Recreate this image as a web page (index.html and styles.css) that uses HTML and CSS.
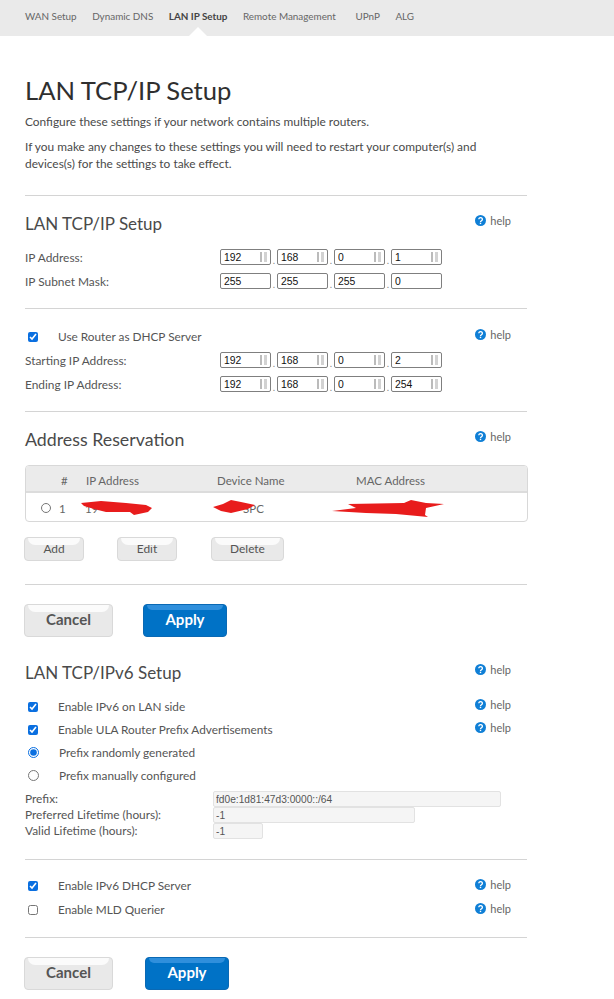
FILE: index.html
```html
<!DOCTYPE html>
<html lang="en">
<head>
<meta charset="utf-8">
<title>LAN TCP/IP Setup</title>
<link rel="stylesheet" href="styles.css">
</head>
<body>
<nav class="tabs">
  <a>WAN Setup</a><a>Dynamic DNS</a><a class="active">LAN IP Setup</a><a class="wide">Remote Management</a><a>UPnP</a><a>ALG</a>
</nav>
<svg width="0" height="0" class="defs"><defs>
  <symbol id="q" viewBox="0 0 11 11"><circle cx="5.5" cy="5.5" r="5.5" fill="#0f7fd6"/><path d="M3.8 4.3a1.8 1.6 0 1 1 2.7 1.4c-.7.4-1 .7-1 1.4" fill="none" stroke="#fff" stroke-width="1.3"/><rect x="4.8" y="7.7" width="1.4" height="1.4" fill="#fff"/></symbol>
</defs></svg>
<main class="page">
  <h1>LAN TCP/IP Setup</h1>
  <p class="intro">Configure these settings if your network contains multiple routers.</p>
  <p class="intro second">If you make any changes to these settings you will need to restart your computer(s) and devices(s) for the settings to take effect.</p>

  <section class="block first">
    <div class="head"><h2>LAN TCP/IP Setup</h2><a class="help"><svg class="q"><use href="#q"/></svg>help</a></div>
    <div class="iprow r1"><label>IP Address:</label><div class="octets"><input class="spin" type="text" value="192"><i>.</i><input class="spin" type="text" value="168"><i>.</i><input class="spin" type="text" value="0"><i>.</i><input class="spin" type="text" value="1"></div></div>
    <div class="iprow r2"><label>IP Subnet Mask:</label><div class="octets"><input type="text" value="255"><i>.</i><input type="text" value="255"><i>.</i><input type="text" value="255"><i>.</i><input type="text" value="0"></div></div>
  </section>

  <section class="block dhcp">
    <div class="check"><label class="opt"><input type="checkbox" checked><span>Use Router as DHCP Server</span></label><a class="help"><svg class="q"><use href="#q"/></svg>help</a></div>
    <div class="iprow r3"><label>Starting IP Address:</label><div class="octets"><input class="spin" type="text" value="192"><i>.</i><input class="spin" type="text" value="168"><i>.</i><input class="spin" type="text" value="0"><i>.</i><input class="spin" type="text" value="2"></div></div>
    <div class="iprow r2b"><label>Ending IP Address:</label><div class="octets"><input class="spin" type="text" value="192"><i>.</i><input class="spin" type="text" value="168"><i>.</i><input class="spin" type="text" value="0"><i>.</i><input class="spin" type="text" value="254"></div></div>
  </section>

  <section class="block reserve">
    <div class="head"><h2>Address Reservation</h2><a class="help"><svg class="q"><use href="#q"/></svg>help</a></div>
    <div class="table">
      <div class="trow thead"><span class="c-num">#</span><span class="c-ip">IP Address</span><span class="c-name">Device Name</span><span class="c-mac">MAC Address</span></div>
      <div class="trow tbody"><input type="radio" class="c-radio"><span class="c-n">1</span><span class="c-ip2">19</span><span class="c-name2">SPC</span></div>
      <svg class="scribble" width="502" height="30" viewBox="0 0 502 30"><path d="M55 10L75 8L100 10L120 12L126 15L122 19L108 22L104 19L80 19L68 16L58 13ZM187 14L197 11L205 7L215 9L229 12L222 16L205 20L195 18ZM306 18L330 15L322 11L378 10L385 7L400 10L418 11L400 15L399 22L402 24L370 21L340 20Z" fill="#e81c1c"/></svg>
    </div>
    <div class="actions"><button class="btn small add">Add</button><button class="btn small edit">Edit</button><button class="btn small del">Delete</button></div>
  </section>

  <section class="block submit">
    <button class="btn big">Cancel</button><button class="btn primary">Apply</button>
  </section>

  <div class="head v6"><h2>LAN TCP/IPv6 Setup</h2><a class="help"><svg class="q"><use href="#q"/></svg>help</a></div>
  <div class="check gap1"><label class="opt"><input type="checkbox" checked><span>Enable IPv6 on LAN side</span></label><a class="help"><svg class="q"><use href="#q"/></svg>help</a></div>
  <div class="check"><label class="opt"><input type="checkbox" checked><span>Enable ULA Router Prefix Advertisements</span></label><a class="help"><svg class="q"><use href="#q"/></svg>help</a></div>
  <div class="check"><label class="opt"><input type="radio" name="prefix" checked><span>Prefix randomly generated</span></label></div>
  <div class="check"><label class="opt"><input type="radio" name="prefix"><span>Prefix manually configured</span></label></div>
  <div class="field top"><label>Prefix:</label><input class="w-l" type="text" value="fd0e:1d81:47d3:0000::/64"></div>
  <div class="field"><label>Preferred Lifetime (hours):</label><input class="w-m" type="text" value="-1"></div>
  <div class="field"><label>Valid Lifetime (hours):</label><input class="w-s" type="text" value="-1"></div>

  <section class="block server">
    <div class="check"><label class="opt"><input type="checkbox" checked><span>Enable IPv6 DHCP Server</span></label><a class="help"><svg class="q"><use href="#q"/></svg>help</a></div>
    <div class="check"><label class="opt"><input type="checkbox"><span>Enable MLD Querier</span></label><a class="help"><svg class="q"><use href="#q"/></svg>help</a></div>
  </section>

  <section class="block submit last">
    <button class="btn big">Cancel</button><button class="btn primary far">Apply</button>
  </section>
</main>
</body>
</html>
```
FILE: styles.css
```css
* { box-sizing: border-box; }
html, body { margin: 0; padding: 0; background: #fff; }
body { font-family: Lato, "Noto Sans", sans-serif; color: #5a5a5a; font-size: 12px; overflow: hidden; }
.defs { position: absolute; }
.tabs { height: 36px; background: #eaeaea; display: flex; gap: 15.5px; padding: 9px 0 0 25px; font-size: 9.9px; line-height: 15px; color: #666; position: relative; }
.tabs .wide { min-width: 97px; }
.tabs .active { color: #444; font-weight: 700; position: relative; }
.tabs .active::after { content: ""; position: absolute; left: 20px; top: 18px; border: 9px solid transparent; border-top: 0; border-bottom-color: #fff; }
.page { width: 527px; padding-left: 25px; }
h1 { margin: 36px 0 0; font-size: 25.6px; line-height: 36px; font-weight: 400; color: #2f2f2f; }
.intro { margin: 5px 0 0; font-size: 11.9px; line-height: 17px; color: #4a4a4a; width: 480px; }
.second { margin-top: 8px; }
.block { border-top: 1px solid #d4d4d4; }
.first { margin-top: 23px; height: 113px; padding-top: 15px; }
h2 { margin: 0; font-size: 17px; line-height: 26px; font-weight: 400; color: #4a4a4a; }
.reserve h2 { font-size: 17.8px; line-height: 24px; }
.head { display: flex; justify-content: space-between; padding-right: 16px; height: 26px; }
.help { display: inline-flex; align-items: center; gap: 4px; font-size: 11px; line-height: 15px; color: #666; height: 15px; }
.head .help { margin-top: 2px; }
.check .help { margin-bottom: 4px; }
.server .check .help { margin-bottom: 2px; }
.q { width: 11px; height: 11px; }
.iprow { display: flex; align-items: center; height: 16px; }
.iprow label { width: 195px; font-size: 11.9px; color: #555; }
.r1 { margin-top: 12px; }
.r2 { margin-top: 8px; }
.r3 { margin-top: 4px; }
.r2b { margin-top: 8px; }
.octets { display: flex; width: 222px; justify-content: space-between; align-items: flex-end; }
.octets i { font-style: normal; font-size: 10px; line-height: 10px; color: #888; width: 6px; text-align: center; }
.octets input { width: 51px; height: 16px; padding: 0 2px 0 3px; border: 1px solid #7f7f7f; border-radius: 2px; font: 10.4px "Liberation Sans", Arial, sans-serif; color: #111; background: #fff; outline: 0; }
.octets .spin { background-image: linear-gradient(#bbb, #bbb), linear-gradient(#d2d2d2, #d2d2d2); background-size: 2px 10px, 3px 10px; background-position: right 8px center, right 3px center; background-repeat: no-repeat; }
.dhcp { height: 103px; padding-top: 16px; }
.check { display: flex; justify-content: space-between; align-items: center; height: 23px; padding-right: 16px; }
.opt { display: flex; align-items: center; font-size: 11.8px; color: #555; }
.opt input { width: 10px; height: 10px; margin: 0 20px 0 3px; accent-color: #0a6fe0; flex: none; }
.opt input[type=radio] { width: 11px; height: 11px; margin-right: 20px; margin-left: 3px; }
.reserve { height: 173px; padding-top: 15px; }
.table { position: relative; margin-top: 12px; width: 503px; height: 57px; border: 1px solid #d8d8d8; border-radius: 4px; overflow: hidden; font-size: 11.5px; color: #666; }
.trow { position: relative; display: flex; align-items: center; }
.thead { height: 27px; background: #ebebeb; border-bottom: 2px solid #dcdcdc; padding-top: 3px; }
.tbody { height: 28px; padding-top: 2px; }
.c-num { margin-left: 35px; width: 25px; }
.c-ip { width: 131px; }
.c-name { width: 139px; }
.c-radio { margin: 0 0 0 15px; width: 10px; height: 10px; }
.c-n { margin-left: 8px; width: 26px; }
.c-ip2 { width: 132px; }
.c-name2 { margin-left: 26px; }
.scribble { position: absolute; left: 0; top: 27px; }
.actions { display: flex; margin: 15px 0 0 -1px; }
.btn { position: relative; overflow: hidden; font-family: inherit; border: 1px solid #d9d9d9; border-radius: 4px; background: #e9e9e9; color: #555; padding: 0 0 2px; display: block; }
.btn::before { content: ""; position: absolute; top: 0; left: 3px; right: 3px; height: 7px; background: #fbfbfb; border-radius: 0 0 9px 9px; }
.small { height: 24px; font-size: 11.9px; }
.add { width: 60px; }
.edit { width: 60px; margin-left: 33px; }
.del { width: 73px; margin-left: 34px; }
.submit { height: 68px; padding-top: 19px; display: flex; align-items: flex-start; }
.big { width: 89px; height: 33px; margin-left: -1px; font-size: 15px; font-weight: 700; padding-bottom: 4px; }
.primary { width: 84px; height: 33px; margin-left: 30px; background: #0072c6; border-color: #0a69b4; color: #fff; font-size: 15px; font-weight: 700; padding-bottom: 4px; }
.primary::before { background: #2f8fdc; height: 5px; }
.far { margin-left: 32px; }
.v6 { margin-top: 8px; }
.gap1 { margin-top: 9px; }
.field { display: flex; align-items: center; height: 16px; font-size: 11.9px; color: #555; }
.field label { width: 188px; line-height: 16px; }
.top { margin-top: 4px; }
.field input { height: 16px; padding: 0 2px; border: 1px solid #e2e2e2; border-radius: 2px; background: #f5f5f5; font: 10.2px "Liberation Sans", Arial, sans-serif; color: #555; }
.w-l { width: 288px; }
.w-m { width: 202px; }
.w-s { width: 50px; }
.server { margin-top: 20px; height: 78px; padding-top: 14px; }
.server .check + .check { margin-top: 1px; }
.last { padding-top: 19px; }
```
